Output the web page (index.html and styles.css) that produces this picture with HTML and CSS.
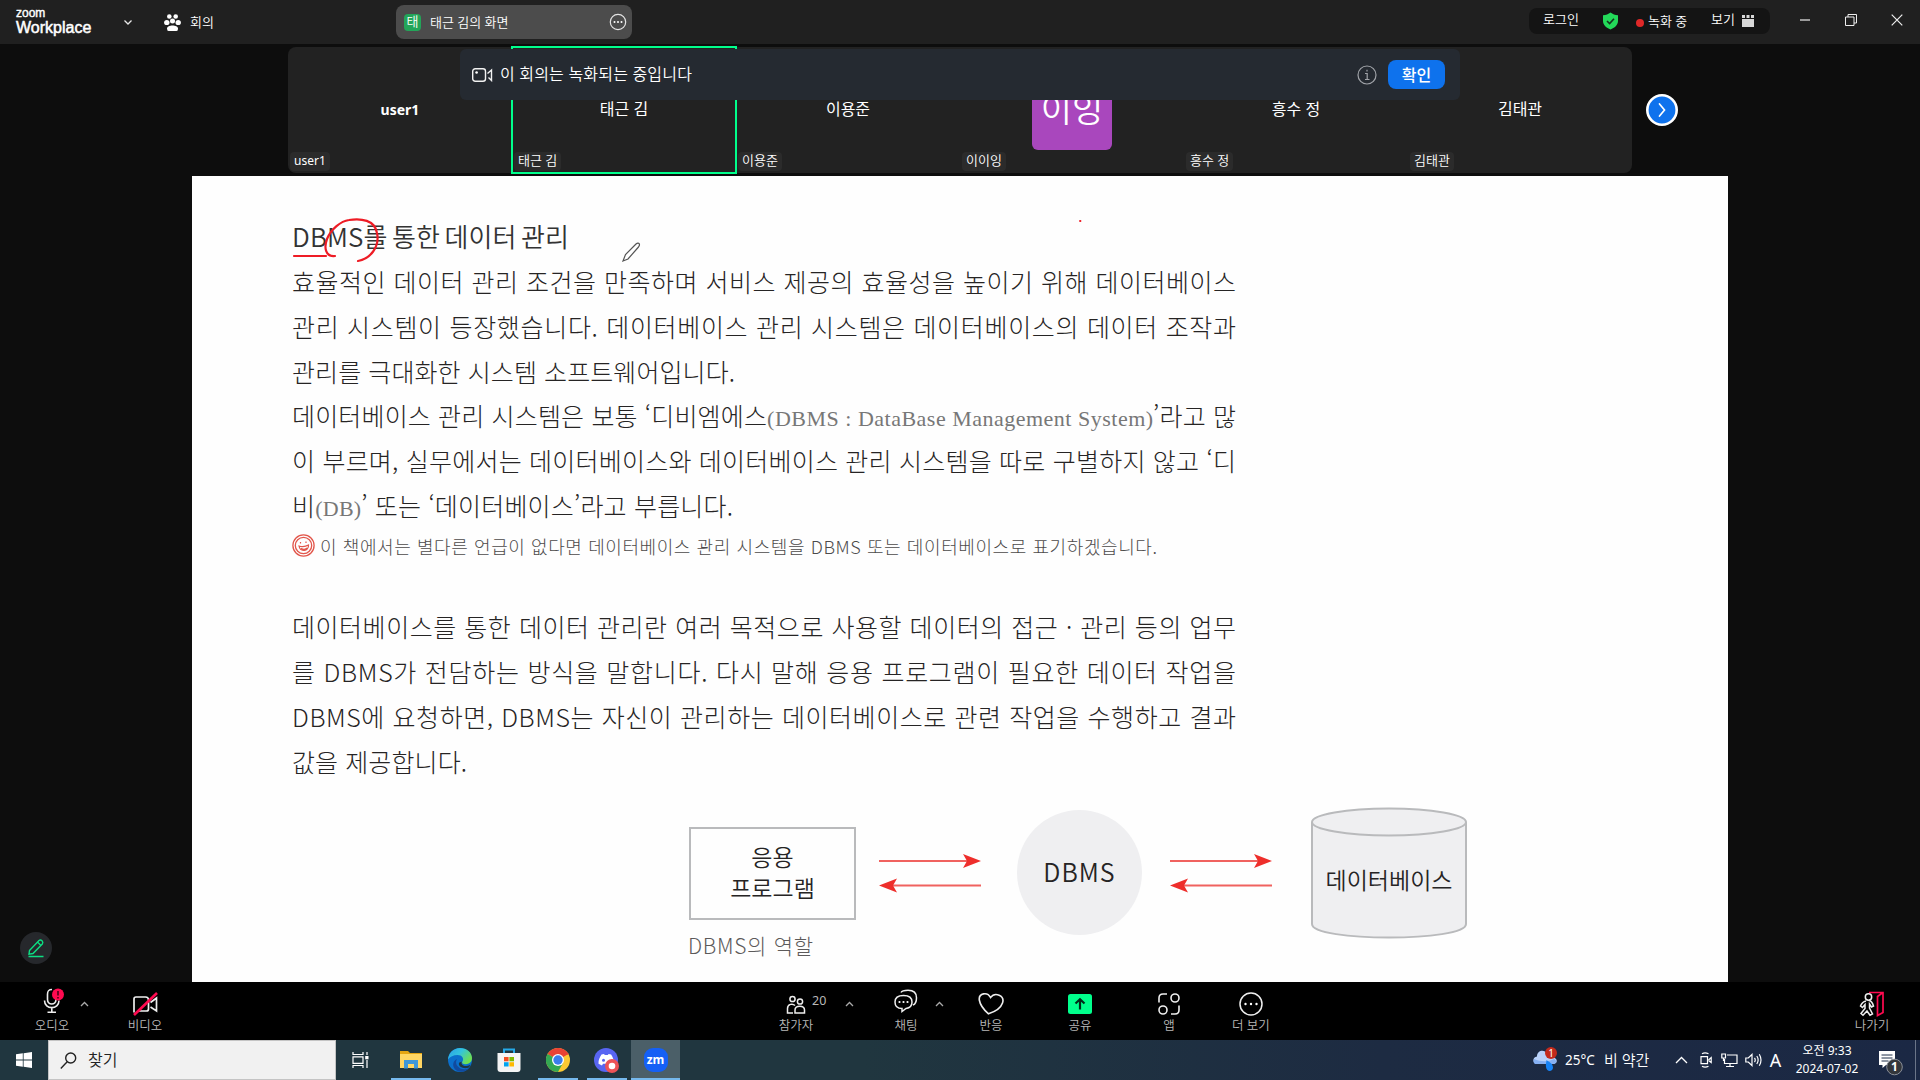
FILE: index.html
```html
<!DOCTYPE html>
<html lang="ko">
<head>
<meta charset="utf-8">
<title>Zoom Workplace</title>
<link rel="stylesheet" href="styles.css">
</head>
<body>
<div class="app">
  <header class="topbar">
    <div class="brand"><span class="brand-zoom">zoom</span><span class="brand-name">Workplace</span></div>
    <svg class="brand-caret" width="10" height="7" viewBox="0 0 10 7"><path d="M1.5 1.5 5 5l3.500-3.500" fill="none" stroke="#e8e8e8" stroke-width="1.300"/></svg>
    <div class="meeting">
      <svg width="17" height="17" viewBox="0 0 17 17" fill="#fff"><circle cx="5.300" cy="2.500" r="2.300"/><circle cx="11.700" cy="2.500" r="2.300"/><circle cx="8.500" cy="7" r="2.500"/><ellipse cx="2.800" cy="8.500" rx="2.700" ry="2.600"/><ellipse cx="14.200" cy="8.500" rx="2.700" ry="2.600"/><path d="M3 14.500C3 10.500 14 10.500 14 14.500q0 2.500-1.500 2.500h-8Q3 17 3 14.500z"/></svg>
      <span>회의</span>
    </div>
    <div class="share-tab">
      <span class="share-badge">태</span>
      <span class="share-title">태근 김의 화면</span>
      <svg width="18" height="18" viewBox="0 0 18 18"><circle cx="9" cy="9" r="7.700" fill="none" stroke="#e4e4e4" stroke-width="1.200"/><g fill="#fff"><circle cx="5.500" cy="9" r="1"/><circle cx="9" cy="9" r="1"/><circle cx="12.500" cy="9" r="1"/></g></svg>
    </div>
    <div class="status">
      <span class="login">로그인</span>
      <svg class="shield" width="17" height="18" viewBox="0 0 17 18"><path d="M8.500.5c2 1.700 4.700 2.500 7.500 2.700V9c0 4-3.500 7-7.500 8.500C4.500 16 1 13 1 9V3.200C3.800 3 6.500 2.200 8.500.5z" fill="#23d959"/><path d="M5 9l2.600 2.600L12 6.700" fill="none" stroke="#14351f" stroke-width="1.600"/></svg>
      <span class="dot"></span><span class="rec">녹화 중</span>
      <span class="view">보기</span>
      <svg class="grid" width="12" height="12" viewBox="0 0 12 12" fill="#d8d8d8"><path d="M0 0h3v3H0zM4.500 0h3v3h-3zM9 0h3v3H9zM0 4h12v8H0z"/></svg>
    </div>
    <div class="window-buttons">
      <svg width="12" height="12" viewBox="0 0 12 12"><path d="M1 6h10" stroke="#bbb" stroke-width="1.600"/></svg>
      <svg width="12" height="12" viewBox="0 0 12 12" fill="none" stroke="#eee"><path d="M.5 3h8.500v8.500H.5zM3 3V.5h8.500V9H9"/></svg>
      <svg width="12" height="12" viewBox="0 0 12 12"><path d="M.7.7l10.600 10.600M11.300.7.7 11.300" stroke="#eee" stroke-width="1.200"/></svg>
    </div>
  </header>

  <section class="gallery">
    <div class="tiles">
      <div class="tile"><b>user1</b><span class="tag">user1</span></div>
      <div class="tile active"><b>태근 김</b><span class="tag">태근 김</span></div>
      <div class="tile"><b>이용준</b><span class="tag">이용준</span></div>
      <div class="tile"><i class="avatar">이잉</i><span class="tag">이이잉</span></div>
      <div class="tile"><b>흥수 정</b><span class="tag">흥수 정</span></div>
      <div class="tile"><b>김태관</b><span class="tag">김태관</span></div>
    </div>
    <div class="next"><svg width="32" height="32" viewBox="0 0 32 32"><circle cx="16" cy="16" r="14.700" fill="#0e72ed" stroke="#fff" stroke-width="2.600"/><path d="M13.500 10l5 6-5 6" fill="none" stroke="#fff" stroke-width="1.700" stroke-linecap="round"/></svg></div>
    <div class="notice">
      <svg width="21" height="14" viewBox="0 0 21 14" fill="none" stroke="#f2f2f2" stroke-width="1.400"><rect x=".7" y=".7" width="12.800" height="12.600" rx="2.500"/><circle cx="4.600" cy="4.500" r="1.300" fill="#fff" stroke="none"/><path d="M15.500 5.500l4-3.500v10.500L16.500 9.500"/></svg>
      <span class="notice-text">이 회의는 녹화되는 중입니다</span>
      <svg class="info" width="20" height="20" viewBox="0 0 20 20" fill="none" stroke="#a0a3a8" stroke-width="1.200"><circle cx="10" cy="10" r="9"/><path d="M8 8.500h2.200V14M8 14.500h4.500M10 4.800v1.700"/></svg>
      <button class="ok">확인</button>
    </div>
  </section>

  <main class="stage">
    <div class="slide">
      <h1 class="fit w-title">DBMS를 통한 데이터 관리</h1>
      <div class="para">
        <p class="fit w-full">효율적인 데이터 관리 조건을 만족하며 서비스 제공의 효율성을 높이기 위해 데이터베이스</p>
        <p class="fit w-full">관리 시스템이 등장했습니다. 데이터베이스 관리 시스템은 데이터베이스의 데이터 조작과</p>
        <p class="fit w-l3">관리를 극대화한 시스템 소프트웨어입니다.</p>
        <p class="fit w-full">데이터베이스 관리 시스템은 보통 ‘디비엠에스<span class="latin w-latin">(DBMS : DataBase Management System)</span>’라고 많</p>
        <p class="fit w-full">이 부르며, 실무에서는 데이터베이스와 데이터베이스 관리 시스템을 따로 구별하지 않고 ‘디</p>
        <p class="fit w-l6">비<span class="latin w-db">(DB)</span>’ 또는 ‘데이터베이스’라고 부릅니다.</p>
      </div>
      <div class="note">
        <svg width="23" height="23" viewBox="0 0 23 23" fill="none" stroke="#e2574c"><circle cx="11.500" cy="11.500" r="10.600" stroke-width="1.300"/><circle cx="11.500" cy="11.500" r="8.200" stroke-width="1.300"/><path d="M7 12q5 1.500 9.500-1C17 18 8 18 7 12zM8.500 8v1.500M14 7.500V9" stroke-width="1.200"/><path d="M9 14.500q3.500 2.500 6-.5" stroke-width="1.600"/></svg>
        <p class="fit w-note">이 책에서는 별다른 언급이 없다면 데이터베이스 관리 시스템을 DBMS 또는 데이터베이스로 표기하겠습니다.</p>
      </div>
      <div class="para second">
        <p class="fit w-full">데이터베이스를 통한 데이터 관리란 여러 목적으로 사용할 데이터의 접근 · 관리 등의 업무</p>
        <p class="fit w-full">를 DBMS가 전담하는 방식을 말합니다. 다시 말해 응용 프로그램이 필요한 데이터 작업을</p>
        <p class="fit w-full">DBMS에 요청하면, DBMS는 자신이 관리하는 데이터베이스로 관련 작업을 수행하고 결과</p>
        <p class="fit w-l10">값을 제공합니다.</p>
      </div>
      <div class="figure">
        <div class="program">응용<br>프로그램</div>
        <svg class="arrows" width="102" height="40" viewBox="0 0 102 40"><path d="M0 8h88M14 32.500h88" stroke="#f0625f" stroke-width="2"/><path d="M102 8 84 1l4 7-4 7zM0 32.500l18-7-4 7 4 7z" fill="#ee2e2b"/></svg>
        <div class="dbms">DBMS</div>
        <svg class="arrows" width="102" height="40" viewBox="0 0 102 40"><path d="M0 8h88M14 32.500h88" stroke="#f0625f" stroke-width="2"/><path d="M102 8 84 1l4 7-4 7zM0 32.500l18-7-4 7 4 7z" fill="#ee2e2b"/></svg>
        <div class="database">
          <svg width="156" height="132" viewBox="0 0 156 132" fill="#efeff1" stroke="#b9babc" stroke-width="2"><path d="M1 15v102c0 18 154 18 154 0V15"/><ellipse cx="78" cy="15" rx="77" ry="13.500"/></svg>
          <span>데이터베이스</span>
        </div>
      </div>
      <p class="caption"><span class="fit w-caption">DBMS의 역할</span></p>
      <svg class="ink" width="1536" height="806" viewBox="0 0 1536 806" fill="none" stroke="#ee1c25" stroke-width="2.200" stroke-linecap="round"><path d="M102 80h32M143 80c-10 1-11-9-8-17 4-10 14-18 22-19 12-2 26 0 28 13 3 14-7 26-19 28"/><path d="M888 45h.5" stroke-width="1.800"/><path d="M431 85l2.500-6.500 10.500-10.500c3-2.500 4.500.5 2.500 3L436 83z" stroke="#555" stroke-width="1.200" fill="#fff"/></svg>
    </div>
    <div class="annotate"><svg width="18" height="20" viewBox="0 0 18 20" fill="none" stroke="#0ddf83" stroke-width="1.400"><path d="M2.500 12.500 12 2.500q1.500-1.200 3 .3t.3 3.200L6 15.500l-4 .7zM10.500 4l3.500 3.500M1.500 18.500h15"/></svg></div>
  </main>

  <footer class="controls">
    <div class="left">
      <div class="ctl audio"><svg width="30" height="26" viewBox="0 0 30 26" fill="none" stroke="#eee" stroke-width="1.600"><path d="M15 1.500c-4 0-4.500 2-4.500 5v5c0 6 8.500 6 8.500 0V9M7.500 12.500c0 9.500 14.500 9.500 14.500 0M14.800 19.500V24M10.500 24.300h8.500"/><circle cx="21" cy="6.500" r="6" fill="#ff0a50" stroke="none"/><path d="M21 3v4.500M21 9v1.500" stroke="#4a0018"/></svg><span>오디오</span></div>
      <svg class="up" width="9" height="6" viewBox="0 0 9 6"><path d="M1 5l3.500-3.500L8 5" fill="none" stroke="#aaa" stroke-width="1.300"/></svg>
      <div class="ctl video"><svg width="30" height="26" viewBox="0 0 30 26" fill="none" stroke="#eee" stroke-width="1.700"><path d="M4 21.500V8q0-2 2-2h9.500q3 0 3 3v9q0 2-2 2H9M20.500 11.500l6-4.500v13l-6-4"/><path d="M4 24 27 2" stroke="#ff0a50" stroke-width="2.600"/></svg><span>비디오</span></div>
    </div>
    <div class="center">
      <div class="ctl c-people"><svg width="20" height="20" viewBox="0 0 20 20" fill="none" stroke="#eee" stroke-width="1.500"><circle cx="6.500" cy="4" r="2.600"/><circle cx="14" cy="6.500" r="2.600"/><path d="M7 18H1.500v-4.500C1.500 8.500 7 8.500 9 10.500M9 18v-3c0-5 9.500-5 9.500 0v3z"/></svg><span>참가자</span></div>
      <div class="count">20</div>
      <svg class="up" width="9" height="6" viewBox="0 0 9 6"><path d="M1 5l3.500-3.500L8 5" fill="none" stroke="#aaa" stroke-width="1.300"/></svg>
      <div class="ctl c-chat"><svg width="24" height="24" viewBox="0 0 24 24" fill="none" stroke="#eee" stroke-width="1.500"><path d="M7 3.500C8 1.500 10 1.200 14 1.200c6 0 8.500 2.500 8.500 7.500 0 4-.5 6-3.500 7.500"/><path d="M9.500 6.500c6 0 8.500 2 8.500 6.500s-2.500 6-6 6.500l-4 3v-3c-5 0-7-2-7-6.500s2.500-6.500 8.500-6.500z"/><g fill="#fff" stroke="none"><circle cx="5.500" cy="13" r="1.100"/><circle cx="9.500" cy="13" r="1.100"/><circle cx="13.500" cy="13" r="1.100"/></g></svg><span>채팅</span></div>
      <svg class="up" width="9" height="6" viewBox="0 0 9 6"><path d="M1 5l3.500-3.500L8 5" fill="none" stroke="#aaa" stroke-width="1.300"/></svg>
      <div class="ctl c-react"><svg width="26" height="24" viewBox="0 0 26 24" fill="none" stroke="#eee" stroke-width="1.600"><path d="M10.500 21.800Q2.500 15 1.300 8C.5 1 9.500-.5 12.500 5.500 17-.5 27 3.500 24.500 11 22.500 17 16 20 10.500 21.800z"/></svg><span>반응</span></div>
      <div class="ctl c-share"><svg width="24" height="20" viewBox="0 0 24 20"><rect width="24" height="20" rx="2.500" fill="#00ff8c"/><path d="M12 15.500V6M7.500 9.500 12 5.200l4.500 4.300" fill="none" stroke="#002a18" stroke-width="2.200"/></svg><span>공유</span></div>
      <div class="ctl c-apps"><svg width="22" height="22" viewBox="0 0 22 22" fill="none" stroke="#eee" stroke-width="1.600"><circle cx="17" cy="5" r="4"/><circle cx="5" cy="17" r="4"/><path d="M9 1H5Q1 1 1 5v4.500M13 21h4q4 0 4-4v-4.500"/></svg><span>앱</span></div>
      <div class="ctl c-more"><svg width="24" height="24" viewBox="0 0 24 24" fill="#fff"><circle cx="12" cy="12" r="11" fill="none" stroke="#eee" stroke-width="1.500"/><circle cx="6.500" cy="12" r="1.200"/><circle cx="12" cy="12" r="1.200"/><circle cx="17.500" cy="12" r="1.200"/></svg><span>더 보기</span></div>
    </div>
    <div class="ctl leave"><svg width="26" height="26" viewBox="0 0 26 26" fill="none" stroke="#eee" stroke-width="1.500"><path d="M10 1.500h14v20l-5.500 3V5.500L24 1.500" stroke="#ff0a50" stroke-width="1.700"/><circle cx="9.500" cy="6" r="3.200"/><path d="M7 10Q3 11 1.500 15l2 1.500 2.500-3v4L2 22.500l2 1.800 4-4.300 3 4.300 2.500-1.300-3-6v-4l2 3 2-1Q13 10 10 9.500"/></svg><span>나가기</span></div>
  </footer>

  <nav class="taskbar">
    <div class="start"><svg width="16" height="16" viewBox="0 0 16 16" fill="#fff"><path d="M0 2.300 6.800 1.300V7.600H0zM7.600 1.200 16 0v7.600H7.600zM0 8.400h6.800v6.300L0 13.700zM7.600 8.400H16V16l-8.400-1.200z"/></svg></div>
    <div class="search"><svg width="17" height="17" viewBox="0 0 17 17" fill="none" stroke="#222" stroke-width="1.400"><circle cx="10.700" cy="6" r="5"/><path d="M7.200 9.800.8 16.400"/></svg><span>찾기</span></div>
    <div class="apps">
      <div class="tb"><svg width="17" height="16" viewBox="0 0 17 16" fill="none" stroke="#fff" stroke-width="1.200"><path d="M1 0v2.500h10V0M1 16v-2.500h10V16M1 4.800h10v6.500H1zM15 0v3M15 8v8"/><path d="M13.200 4h3.300v3.300h-3.300z" fill="#fff" stroke="none"/></svg></div>
      <div class="tb run"><svg width="22" height="20" viewBox="0 0 22 20"><path d="M0 1h8l2 2h12v15H0z" fill="#e5a512"/><path d="M0 4h22v14H0z" fill="#ffd663"/><path d="M4 18.500V10h14v8.500h-4V14H8v4.500z" fill="#3e97d8"/></svg></div>
      <div class="tb"><svg width="24" height="24" viewBox="0 0 24 24"><defs><linearGradient id="edgeTop" x1="0" y1="0" x2="1" y2=".6"><stop offset="0" stop-color="#2a9fe8"/><stop offset=".5" stop-color="#33c4dd"/><stop offset="1" stop-color="#6fe04e"/></linearGradient></defs><circle cx="12" cy="12" r="12" fill="#0b6fcb"/><path d="M0 11.500C.5 5 5.500 0 12 0c7 0 12 4.800 12 10 0 4-3 6.200-6.300 6.200-3 0-4-1.200-3.500-2.200 2.400-3.500-.2-7-4.700-7C5.500 7 2 8.500 0 11.500z" fill="url(#edgeTop)"/><path d="M9 11c-3 5 1.500 10.500 8 10.200 2-.2 3.800-1 5-2.200C19 23.500 13 25 8.500 22.500 3.500 19 4.500 13 9 11z" fill="#114a9e"/><path d="M13.900 13.500c-1.500 2.500 1.500 5 5 4.500 1.500-.2 2.500-.6 3.600-1.200-.5 1.300-1.200 2.200-2 3-5 1.500-10.500-1-9.500-5z" fill="#20363f"/></svg></div>
      <div class="tb"><svg width="24" height="24" viewBox="0 0 24 24"><path d="M7 6V1.500h10V6" fill="none" stroke="#25a9e8" stroke-width="2"/><path d="M.5 5h23v16q0 3-3 3h-17q-3 0-3-3z" fill="#f4f4f4"/><path d="M7 9h4.600v4.300H7z" fill="#f25022"/><path d="M12.400 9H17v4.300h-4.600z" fill="#7fba00"/><path d="M7 14.200h4.600v4.300H7z" fill="#00a4ef"/><path d="M12.400 14.200H17v4.300h-4.600z" fill="#ffb900"/></svg></div>
      <div class="tb run"><svg width="24" height="24" viewBox="0 0 24 24"><circle cx="12" cy="12" r="12" fill="#fcc934"/><path d="M12 12 1.600 6A12 12 0 0 1 22.400 6z" fill="#ea4335"/><path d="M1.600 6A12 12 0 0 0 12 24l5-9-5-3z" fill="#34a853"/><path d="M12 6h10.400" stroke="#ea4335"/><circle cx="12" cy="12" r="6" fill="#fff"/><circle cx="12" cy="12" r="4.700" fill="#3b7ded"/></svg></div>
      <div class="tb run"><svg width="25" height="25" viewBox="0 0 25 25"><circle cx="12" cy="12" r="12" fill="#5865f2"/><path d="M7.500 6.500l2.500-.6.800 1.200h3l.8-1.200 2.500.6c2 3 3 6 2.800 9.200L16.500 17.500l-1-1.700h-6.500l-1 1.700L4.500 15.700C4.300 12.500 5.500 9.500 7.500 6.500z" fill="#fff"/><circle cx="9.500" cy="12.200" r="1.500" fill="#5865f2"/><circle cx="18" cy="18" r="7" fill="#ed5357"/><circle cx="18" cy="18" r="3.300" fill="#fff"/></svg></div>
      <div class="tb run current"><span class="zm">zm</span></div>
    </div>
    <div class="tray">
      <svg class="weather" width="26" height="26" viewBox="0 0 26 26"><path d="M5 17c-6 0-6-7-1-7.500C4 3 12 2 14 7c3-1 6 1 6 3.500 5 .5 5 6.500 0 6.500z" fill="#b9d2fa"/><path d="M3 17h17c4 0 4-4 1-5-6 3-13 3-20 0-1 3 0 5 2 5z" fill="#86b0f2"/><circle cx="18" cy="6" r="6" fill="#c42b1c"/><text x="18" y="9.700" font-size="10" text-anchor="middle" fill="#fff" font-family="Noto Sans">1</text><path d="M13.500 13c0 2-1 4-.5 7 .6 5.500 7 5 7 .5-.2-4-3-5-6.500-7.500z" fill="#1683f5"/></svg>
      <span class="temp">25°C</span><span class="rain">비 약간</span>
      <svg class="i-up" width="13" height="8" viewBox="0 0 13 8"><path d="M1 7l5.500-5.500L12 7" fill="none" stroke="#fff" stroke-width="1.300"/></svg>
      <svg class="i-cam" width="12" height="16" viewBox="0 0 12 16" fill="none" stroke="#fff" stroke-width="1.200"><path d="M1 4.600h6.500v7H1zM8.500 8l2.700-2.400v5L8.500 8.500M2 1.800Q5 0 8.500 1.800M2 14.200q3 1.800 6.500 0"/></svg>
      <svg class="i-net" width="17" height="15" viewBox="0 0 17 15" fill="none" stroke="#fff" stroke-width="1.200"><path d="M6 2h10v8.500H3.500V6M9 10.500v3M5 13.500h8M.8 1h3.700v4H.8zM2.500 5v3"/></svg>
      <svg class="i-vol" width="17" height="14" viewBox="0 0 17 14" fill="none" stroke="#fff" stroke-width="1.200"><path d="M.8 5h2.500L7 1.500v11L3.300 9H.8zM9.500 4.800q1.500 2.200 0 4.400M11.800 3q2.700 4 0 8M14.300 1.200q3.400 5.800 0 11.600"/></svg>
      <span class="ime">A</span>
      <div class="clock"><span>오전 9:33</span><span>2024-07-02</span></div>
      <svg class="action" width="25" height="25" viewBox="0 0 25 25"><path d="M0 0h16v14H7l-3.500 3v-3H0z" fill="#fff"/><path d="M2.500 4h11M2.500 7h11M2.500 10h7" stroke="#1f2f49"/><circle cx="15.500" cy="16" r="7.800" fill="#33363b" stroke="#8a8f98"/><text x="15.500" y="20.300" font-size="12" font-weight="700" text-anchor="middle" fill="#fff" font-family="Noto Sans">1</text></svg>
      <i class="peek"></i>
    </div>
  </nav>
</div>
<script src="fit.js"></script>
</body>
</html>
```
FILE: fit.js
```js
// Inline latin phrases are set first, so the line around them only tracks its own letters.
function track(el, ownLength) {
  var range = document.createRange();
  range.selectNodeContents(el);
  var natural = range.getBoundingClientRect().width;
  el.style.letterSpacing = (el.clientWidth - natural) / (ownLength - 1) + 'px';
}
document.querySelectorAll('.latin').forEach(function (el) {
  track(el, el.textContent.length);
});
document.querySelectorAll('.fit').forEach(function (line) {
  var inner = line.querySelector('.latin');
  track(line, line.textContent.length - (inner ? inner.textContent.length : 0));
});
```
FILE: styles.css
```css
* { box-sizing: border-box; }
body { margin: 0; background: #0d0d0d; color: #fff; font-family: "Noto Sans", "Noto Sans CJK KR", sans-serif; font-weight: 350; }
svg { display: block; flex: none; }
p, h1 { margin: 0; }
.app { width: 1920px; height: 1080px; overflow: hidden; display: flex; flex-direction: column; }

.topbar { height: 44px; flex: none; background: #202020; display: flex; align-items: center; font-size: 13px; }
.brand { width: 91px; margin-left: 16px; display: flex; flex-direction: column; font-family: "Liberation Sans", sans-serif; }
.brand-zoom { font-size: 12px; line-height: 11px; font-weight: 400; -webkit-text-stroke: .4px #fff; }
.brand-name { font-size: 16px; line-height: 17px; font-weight: 400; -webkit-text-stroke: .5px #fff; }
.brand-caret { margin-left: 16px; }
.meeting { width: 51px; margin-left: 31px; display: flex; align-items: center; gap: 9px; white-space: nowrap; }
.meeting span, .share-title { margin-top: -2px; }
.share-tab { width: 236px; height: 34px; margin-left: 181px; padding: 0 5px 0 8px; border-radius: 8px; background: #4c4c4c; display: flex; align-items: center; }
.share-badge { width: 17px; height: 17px; border-radius: 4px; background: #23a559; text-align: center; line-height: 15px; }
.share-title { flex: 1; margin-left: 9px; }
.status { margin-left: 897px; width: 241px; height: 26px; margin-top: -2px; border-radius: 8px; background: #141414; display: flex; align-items: center; padding-left: 14px; }
.login { width: 39px; margin-top: -5px; white-space: nowrap; }
.shield { margin-left: 20px; }
.dot { width: 8px; height: 8px; border-radius: 50%; background: #e02828; margin: 3px 4px 0 17px; }
.rec { width: 40px; white-space: nowrap; margin-top: -1px; }
.view { margin-left: 23px; width: 25px; margin-top: -5px; white-space: nowrap; }
.grid { margin-left: 6px; }
.window-buttons { display: flex; gap: 34px; margin-left: 29px; margin-top: -4px; }

.gallery { height: 132px; flex: none; position: relative; display: flex; padding: 3px 0 0 288px; }
.tiles { width: 1344px; height: 126px; border-radius: 8px; background: #222; display: flex; }
.tile { width: 224px; position: relative; display: flex; align-items: center; justify-content: center; font-size: 16px; padding-bottom: 4px; }
.tile b { font-weight: 400; }
.tile:first-child { padding-bottom: 2px; }
.tile:first-child b { font-weight: 700; font-size: 14px; }
.tag { position: absolute; left: 2px; bottom: 2px; height: 19px; padding: 0 4px; border-radius: 4px; background: #2b2b2b; font-size: 13px; line-height: 16px; }
.tile:first-child .tag { font-size: 12px; line-height: 18px; font-weight: 400; }
.tile.active::after { content: ""; position: absolute; inset: -1px; border: 2px solid #00ff8c; }
.avatar { width: 80px; height: 80px; margin-top: 3px; border-radius: 6px; background: #a947bd; font-style: normal; font-size: 34px; line-height: 78px; text-align: center; }
.next { margin: 47px 0 0 14px; }
.notice { position: absolute; left: 460px; top: 5px; width: 1000px; height: 51px; border-radius: 6px; background: #252a31; display: flex; align-items: center; padding: 0 15px 0 12px; font-size: 16px; }
.notice-text { flex: 1; margin: -4px 0 0 7px; letter-spacing: .2px; }
.info { margin-right: 11px; }
.ok { width: 57px; height: 29px; border: 0; padding: 0; border-radius: 8px; background: #0e72ed; color: #fff; font: 500 16px/27px "Noto Sans CJK KR", sans-serif; }

.stage { height: 806px; flex: none; position: relative; padding-left: 192px; }
.slide { position: relative; width: 1536px; height: 806px; background: #fefefe; color: #262424; padding: 43px 0 0 100px; font-family: "Noto Sans CJK KR", sans-serif; font-weight: 300; }
.fit { white-space: nowrap; }
.w-title { width: 277px; font-size: 26px; line-height: 34px; font-weight: 350; height: 40px; word-spacing: -3px; color: #333; }
.para .fit { height: 44.800px; }
.w-full { width: 944px; }
.w-l3 { width: 443px; }
.w-l6 { width: 441px; }
.w-l10 { width: 175px; }
.para { font-size: 25px; line-height: 44.800px; }
.latin { display: inline-block; line-height: 30px; font-family: "Liberation Serif", serif; font-size: 22px; color: #777; }
.w-latin { width: 386px; }
.w-db { width: 46px; }
.note { display: flex; align-items: center; gap: 5px; height: 22px; margin-top: 7px; font-size: 18px; color: #4c4a4a; }
.w-note { width: 837px; line-height: 22px; }
.second { margin-top: 47.500px; }
.figure { display: flex; align-items: flex-start; height: 135px; margin: 24px 0 0 397px; font-size: 23px; font-weight: 350; }
.program { width: 167px; height: 93px; margin-top: 20px; border: 2px solid #b9babc; text-align: center; line-height: 31px; padding-top: 12px; }
.arrows { margin: 46px 36px 0 23px; }
.dbms { width: 125px; height: 125px; margin-top: 3px; border-radius: 50%; background: #efeff1; text-align: center; font-size: 25px; line-height: 122px; letter-spacing: 1px; }
.dbms + .arrows { margin: 46px 39px 0 28px; }
.database { position: relative; }
.database span { position: absolute; left: 0; top: 54px; width: 156px; text-align: center; line-height: 36px; white-space: nowrap; }
.caption { margin: -12px 0 0 396px; font-size: 21px; line-height: 30px; color: #5c5a5a; }
.w-caption { display: block; width: 125px; }
.ink { position: absolute; left: 0; top: 0; }
.annotate { position: absolute; left: 20px; bottom: 18px; width: 32px; height: 32px; border-radius: 50%; background: #26282c; display: flex; align-items: center; justify-content: center; }

.controls { height: 58px; flex: none; background: #000; display: flex; color: #b8b8b8; font-size: 12.500px; }
.ctl { width: 60px; height: 58px; flex: none; display: flex; flex-direction: column; align-items: center; justify-content: space-between; padding: 7px 0 6px; }
.ctl span { line-height: 16px; white-space: nowrap; }
.up { margin-top: 19px; }
.left { display: flex; width: 740px; }
.audio { margin-left: 22px; padding-top: 6px; }
.left .up { margin-left: -2px; }
.video { margin-left: 26px; padding-top: 9px; }
.center { display: flex; flex: 1; }
.c-people { margin-left: 26px; padding-top: 13px; }
.count { width: 14px; margin: 10px 19px 0 -14px; line-height: 18px; font-size: 12.500px; font-weight: 400; }
.c-chat { margin-left: 22px; }
.c-chat + .up { margin-left: -1px; }
.c-react { margin-left: 17px; padding-top: 10px; }
.c-share { margin-left: 29px; padding-top: 12px; }
.c-apps { margin-left: 29px; padding-top: 11px; }
.c-more { margin-left: 22px; padding-top: 10px; }
.leave { margin-right: 18px; padding-top: 9px; }

.taskbar { height: 40px; flex: none; display: flex; background: linear-gradient(90deg, #20363f 0, #20363f 45%, #1d2b42 72%, #1b2844 100%); }
.start { width: 48px; display: flex; align-items: center; justify-content: center; }
.search { width: 288px; background: #f1f1f1; border: 1px solid #c4c4c4; display: flex; align-items: center; gap: 11px; padding-left: 11px; color: #222; font-size: 16px; line-height: 34px; }
.search span { margin-top: -1px; }
.apps { display: flex; }
.tb { width: 49px; height: 40px; display: flex; align-items: center; justify-content: center; position: relative; }
.tb:nth-child(2) { margin-left: 1px; }
.tb.run::after { content: ""; position: absolute; left: 5px; right: 4px; bottom: 0; height: 2px; background: #76b9ed; }
.tb.current { background: #4b5f68; }
.tb.current::after { left: 0; right: 0; }
.zm { width: 24px; height: 24px; border-radius: 9px; background: #1560f5; text-align: center; font: 700 12px/23px "Open Sans", sans-serif; }
.tray { display: flex; align-items: center; margin-left: auto; font-size: 14px; font-weight: 400; }
.weather { margin-right: 6px; }
.temp { width: 39px; margin-top: -1px; font-size: 13.500px; }
.rain { width: 57px; margin-top: -2px; white-space: nowrap; font-size: 15px; font-weight: 350; }
.i-up { margin-left: 14px; }
.i-cam { margin-left: 12px; }
.i-net { margin-left: 9px; }
.i-vol { margin-left: 7px; }
.ime { width: 15px; margin-left: 6px; font-size: 18px; text-align: center; }
.clock { width: 70px; margin-left: 9px; display: flex; flex-direction: column; align-items: center; font-size: 12px; line-height: 18px; white-space: nowrap; }
.action { margin: 6px 0 0 17px; }
.peek { width: 1px; height: 40px; margin: 0 4px 0 11px; background: #6b7588; }
```
